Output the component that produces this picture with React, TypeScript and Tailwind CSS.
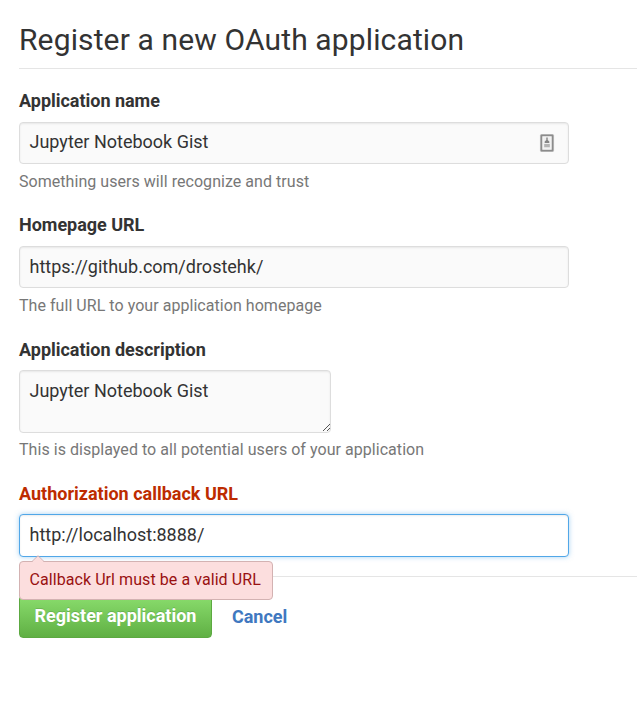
import React from "react";

function Field({
  label,
  hint,
  hintClass,
  children,
}: {
  label: string;
  hint: string;
  hintClass: string;
  children: React.ReactNode;
}) {
  return (
    <div className="flex flex-col items-start">
      <label className="h-[21px] text-[18px] leading-[21px] font-bold tracking-[-0.02px] whitespace-nowrap">{label}</label>
      {children}
      <p className={"text-[16px] leading-[22px] tracking-[0.045px] whitespace-nowrap text-[#777777] " + hintClass}>{hint}</p>
    </div>
  );
}

const inputBox =
  "mt-[11px] flex h-[42px] w-[550px] items-center rounded-[4px] border border-[#dddddd] bg-[#fafafa] pl-[9.5px] text-[18px] shadow-[inset_0_1px_2px_rgba(0,0,0,0.075)]";

function ContactIcon() {
  return (
    <svg width="16" height="20" viewBox="0 0 16 20" className="mt-[2px]">
      <rect x="0.9" y="0.9" width="14.2" height="18.2" rx="1.5" fill="#d4d4d4" />
      <rect x="2.4" y="2.4" width="11.2" height="15.2" rx=".3" fill="#fafafa" stroke="#8c8c8c" strokeWidth="1.8" />
      <rect x="4.3" y="4.3" width="7.4" height="11.4" fill="#eeeeee" />
      <path d="M7.3 4.4H8.7V7L10.3 8.4V10H5.7V8.4L7.3 7Z" fill="#858585" />
      <rect x="5.2" y="11" width="5.6" height="3.2" fill="#b4b4b4" />
    </svg>
  );
}

export default function App() {
  return (
    <main className="h-[706px] w-[637px] overflow-hidden bg-white pl-[19px] font-['Roboto',sans-serif] text-[#333333]">
      <h1 className="h-[69px] border-b border-[#e5e5e5] pt-[20px] text-[30px] leading-[40px] font-normal tracking-[0.13px] whitespace-nowrap">
        Register a new OAuth application
      </h1>
      <form className="pt-[21px]">
        <Field label="Application name" hint="Something users will recognize and trust" hintClass="mt-[7px] h-[21px]">
          <div className={inputBox + " justify-between pr-[13px] pb-[3px]"}>
            <span>Jupyter Notebook Gist</span>
            <ContactIcon />
          </div>
        </Field>
        <div className="h-[22px]" />
        <Field label="Homepage URL" hint="The full URL to your application homepage" hintClass="mt-[7px] h-[21px]">
          <div className={inputBox + " pb-[2px]"}>https://github.com/drostehk/</div>
        </Field>
        <div className="h-[23px]" />
        <Field
          label="Application description"
          hint="This is displayed to all potential users of your application"
          hintClass="mt-[6px] h-[22px]"
        >
          <div className="mt-[10px] flex h-[63px] w-[312px] items-end justify-between rounded-[4px] border border-[#dddddd] bg-[#fafafa] pl-[9.5px] shadow-[inset_0_1px_2px_rgba(0,0,0,0.075)]">
            <span className="self-start pt-[8px] text-[18px] leading-[24px]">Jupyter Notebook Gist</span>
            <svg width="9" height="9" viewBox="0 0 9 9" shapeRendering="crispEdges">
              <path
                d="M8 1.5h1M7 2.5h1M6 3.5h1M5 4.5h1M4 5.5h1M3 6.5h1M2 7.5h1M8 5.5h1M7 6.5h1M6 7.5h1"
                stroke="#555555"
              />
            </svg>
          </div>
        </Field>
        <div className="flex flex-col items-start pt-[22px]">
          <label className="h-[21px] text-[18px] leading-[21px] font-bold text-[#bd2c00]">
            Authorization callback URL
          </label>
          <div className="relative mt-[10px]">
            <div className="flex h-[43px] w-[550px] items-center rounded-[4px] border border-[#51a7e8] bg-white px-[9.5px] pb-[2px] text-[18px] shadow-[inset_0_1px_2px_rgba(0,0,0,0.075),0_0_5px_rgba(81,167,232,0.5)]">
              http://localhost:8888/
            </div>
            <div className="absolute top-[47px] left-0 z-10 flex h-[39px] w-[254px] items-center rounded-[4px] border border-[#d3b2b2] bg-[#fcdede] pb-[2px] pl-[9.5px] text-[16px] tracking-[0.07px] whitespace-nowrap text-[#991111]">
              <svg className="absolute -top-[7px] left-[11px]" width="14" height="8" viewBox="0 0 14 8">
                <path d="M1 7L7 1L13 7V8H1Z" fill="#fcdede" />
                <path d="M1 6.5L7 .7L13 6.5" fill="none" stroke="#d3b2b2" />
              </svg>
              Callback Url must be a valid URL
            </div>
          </div>
        </div>
        <div className="mt-[19px] border-t border-[#e5e5e5]" />
        <div className="flex pt-[18px]">
          <button
            type="button"
            className="h-[43px] w-[193px] rounded-[4px] border border-[#5ca941] bg-linear-to-b from-[#8add6d] to-[#60b044] pb-[2px] text-[18px] font-bold whitespace-nowrap text-white [text-shadow:0_-1px_0_rgba(0,0,0,0.15)]"
          >
            Register application
          </button>
          <a className="ml-[20px] pt-[11px] text-[18px] leading-[21px] font-bold tracking-[-0.03px] text-[#4078c0]">Cancel</a>
        </div>
      </form>
    </main>
  );
}
